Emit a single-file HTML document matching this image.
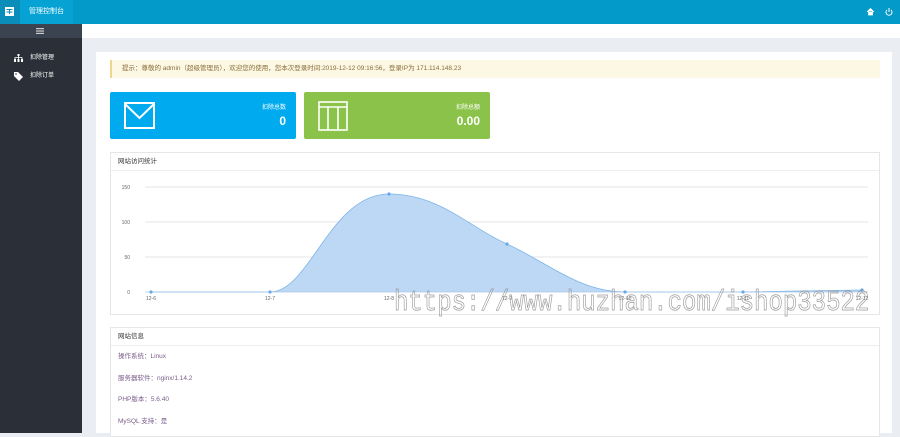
<!DOCTYPE html>
<html><head><meta charset="utf-8"><style>
*{margin:0;padding:0;box-sizing:border-box}
body{width:900px;height:433px;overflow:hidden;background:#eaedf1;font-family:"Liberation Sans","Noto Sans CJK SC",sans-serif;font-size:7px;color:#555;position:relative}
.top{position:absolute;left:0;top:0;width:900px;height:24px;background:#0399c9}
.logo{position:absolute;left:0;top:0;width:20px;height:24px;background:#0b8dba}
.title{position:absolute;left:20px;top:0;width:53px;height:24px;background:#06a2d4;color:#fff;font-size:7px;line-height:24px;text-align:center}
.side{position:absolute;left:0;top:24px;width:82px;height:409px;background:#2b3038}
.sidehd{height:14px;background:#3b4350}
.side .it{color:#fff;font-size:6px;height:18px;line-height:18px;padding-left:30px;position:relative}
.wstrip{position:absolute;left:82px;top:24px;width:818px;height:14px;background:#fff}
.panel{position:absolute;left:96px;top:52px;width:796px;height:381px;background:#fff}
.notice{position:absolute;left:110px;top:60px;width:770px;height:18px;background:#fcf8e3;border-left:2px solid #f0d58c;color:#8a6d3b;font-size:6.5px;line-height:18px;padding-left:10px}
.card{position:absolute;top:92px;width:186px;height:47px;border-radius:2px;color:#fff}
.card .l{position:absolute;right:10px;top:10px;font-size:6px}
.card .v{position:absolute;right:10px;top:22px;font-size:12px;font-weight:bold}
.box{position:absolute;left:110px;width:770px;border:1px solid #e6e6e6;background:#fff}
.box .h{height:18px;border-bottom:1px solid #eee;font-size:6.5px;line-height:17px;padding-left:7px;color:#333}
.info p{font-size:6.5px;color:#7a5c8a;padding-left:7px;height:21.5px;line-height:22px}
</style></head><body>
<div class="top"></div>
<div class="logo"><svg width="20" height="24"><rect x="5" y="7" width="9" height="9" fill="#fff"/><rect x="6.5" y="9" width="6" height="1" fill="#0b8dba"/><rect x="6.5" y="11.5" width="6" height="1" fill="#0b8dba"/><rect x="9" y="9" width="1" height="5" fill="#0b8dba"/></svg></div>
<div class="title">管理控制台</div>
<svg style="position:absolute;left:866px;top:7px" width="30" height="10"><path d="M1 5 L4.5 1.5 L8 5 M2.5 4.5 V8 H6.5 V4.5" fill="#fff" stroke="#fff" stroke-width="0.8"/><path d="M21 3 A3 3 0 1 0 25 3" fill="none" stroke="#fff" stroke-width="1"/><path d="M23 1 V5" stroke="#fff" stroke-width="1"/></svg>
<div class="side"><div class="sidehd"><svg style="margin:4px 0 0 36px" width="8" height="6"><rect width="8" height="1.2" y="0" fill="#ccc"/><rect width="8" height="1.2" y="2.4" fill="#ccc"/><rect width="8" height="1.2" y="4.8" fill="#ccc"/></svg></div>
<div style="height:11px"></div>
<div class="it"><svg style="position:absolute;left:14px;top:5px" width="9" height="8"><rect x="3.5" y="0" width="2" height="2" fill="#fff"/><rect x="0" y="5" width="2" height="3" fill="#fff"/><rect x="3.5" y="5" width="2" height="3" fill="#fff"/><rect x="7" y="5" width="2" height="3" fill="#fff"/><path d="M4.5 2V5M1 5V3.5H8V5" stroke="#fff" stroke-width=".8" fill="none"/></svg>扣除管理</div>
<div class="it"><svg style="position:absolute;left:14px;top:5px" width="9" height="9"><path d="M0 0H4L9 5L5 9L0 4Z" fill="#fff"/><circle cx="2" cy="2" r="0.8" fill="#2b3038"/></svg>扣除订单</div>
</div>
<div class="wstrip"></div>
<div class="panel"></div>
<div class="notice">提示：尊敬的 admin（超级管理员），欢迎您的使用，您本次登录时间:2019-12-12 09:16:56，登录IP为 171.114.148.23</div>
<div class="card" style="left:110px;background:#00aaef"><svg style="position:absolute;left:14px;top:10px" width="31" height="28"><rect x="1" y="1" width="29" height="25" fill="none" stroke="#fff" stroke-width="2"/><path d="M1 2 L15.5 16 L30 2" fill="none" stroke="#fff" stroke-width="2"/></svg><div class="l">扣除总数</div><div class="v">0</div></div>
<div class="card" style="left:304px;background:#8bc34a"><svg style="position:absolute;left:14px;top:9px" width="31" height="30"><rect x="1" y="1" width="28" height="28" fill="none" stroke="#fff" stroke-width="1.6"/><path d="M1 6H29M10 6V29M20 6V29" stroke="#fff" stroke-width="1.6"/></svg><div class="l">扣除总额</div><div class="v">0.00</div></div>
<div class="box" style="top:152px;height:163px"><div class="h">网站访问统计</div></div>
<svg style="position:absolute;left:110px;top:170px" width="770" height="145">
<g font-size="5" fill="#666" font-family="Liberation Sans"><text x="20" y="19" text-anchor="end">150</text><text x="20" y="54" text-anchor="end">100</text><text x="20" y="89" text-anchor="end">50</text><text x="20" y="124" text-anchor="end">0</text></g>
<g stroke="#ddd" stroke-width="0.7"><path d="M35 17H758M35 52H758M35 87H758"/></g>
<path d="M41 122 L160 122 C200 122 220 24 279 24 C330 24 360 58 397 74 C440 94 470 122 515 122 L633 122 L752 120 L752 122 L41 122Z" fill="#bcd8f4"/>
<path d="M41 122 L160 122 C200 122 220 24 279 24 C330 24 360 58 397 74 C440 94 470 122 515 122 L633 122 L752 120" fill="none" stroke="#7db4e8" stroke-width="0.8"/>
<path d="M35 122H758" stroke="#aac8e8" stroke-width="0.8"/>
<g fill="#6aa8e6"><circle cx="41" cy="122" r="1.6"/><circle cx="160" cy="122" r="1.6"/><circle cx="279" cy="24" r="1.6"/><circle cx="397" cy="74" r="1.6"/><circle cx="515" cy="122" r="1.6"/><circle cx="633" cy="122" r="1.6"/><circle cx="752" cy="120" r="1.6"/></g>
<g font-size="5" fill="#666" font-family="Liberation Sans" text-anchor="middle"><text x="41" y="130">12-6</text><text x="160" y="130">12-7</text><text x="279" y="130">12-8</text><text x="397" y="130">12-9</text><text x="515" y="130">12-10</text><text x="633" y="130">12-11</text><text x="752" y="130">12-12</text></g>
</svg>
<div style="position:absolute;left:394px;top:287px;font-family:'Liberation Mono',monospace;font-size:24px;color:transparent;-webkit-text-stroke:0.6px #999;transform:scaleY(1.2);transform-origin:top left;white-space:nowrap">https://www.huzhan.com/ishop33522</div>
<div class="box info" style="top:327px;height:110px"><div class="h">网站信息</div>
<p>操作系统：Linux</p><p>服务器软件：nginx/1.14.2</p><p>PHP版本：5.6.40</p><p>MySQL 支持：是</p></div>
</body></html>
